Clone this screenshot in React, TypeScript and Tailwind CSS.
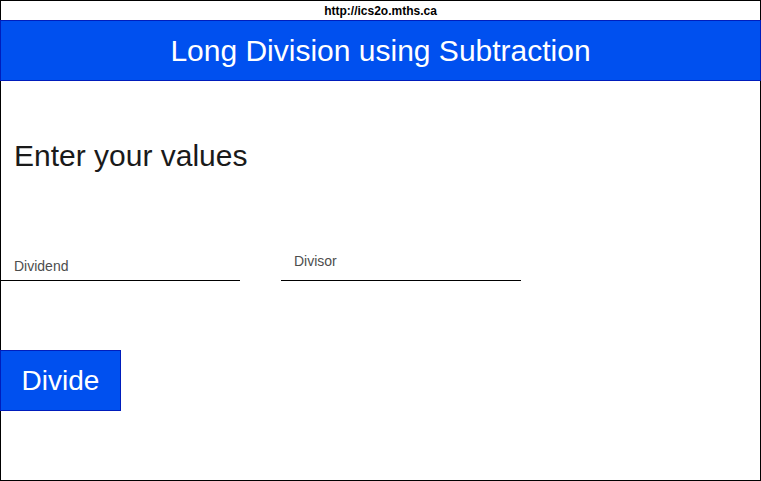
import React from "react";

export default function App() {
  return (
    <div
      className="w-[761px] h-[481px] flex flex-col bg-white"
      style={{ fontFamily: '"Liberation Sans", Arial, sans-serif' }}
    >
      <div className="h-[20px] border-t border-x border-black flex items-center justify-center">
        <span className="text-[12px] font-bold text-black leading-none">http://ics2o.mths.ca</span>
      </div>
      <div className="h-[61px] bg-[#0050ef] border border-[#001dbc] flex items-center justify-center">
        <span className="text-[30px] text-white leading-none">Long Division using Subtraction</span>
      </div>
      <div className="flex-1 border-x border-b border-black flex flex-col">
        <div className="pt-[59px] pl-[13px] text-[30px] text-[#1a1a1a] leading-[32px]">Enter your values</div>
        <div className="mt-[77px] -ml-px flex gap-[41px]">
          <div className="w-[240px] h-[32px] border-b border-black flex items-end pb-[7px] pl-[14px]">
            <span className="text-[14px] text-[#4d4d4d] leading-none">Dividend</span>
          </div>
          <div className="w-[240px] h-[32px] border-b border-black flex items-start pt-[5px] pl-[13px]">
            <span className="text-[14px] text-[#4d4d4d] leading-none">Divisor</span>
          </div>
        </div>
        <div className="mt-[69px] -ml-px">
          <button className="w-[121px] h-[61px] bg-[#0050ef] border border-[#001dbc] text-white text-[28px] flex items-center justify-center">
            Divide
          </button>
        </div>
      </div>
    </div>
  );
}
